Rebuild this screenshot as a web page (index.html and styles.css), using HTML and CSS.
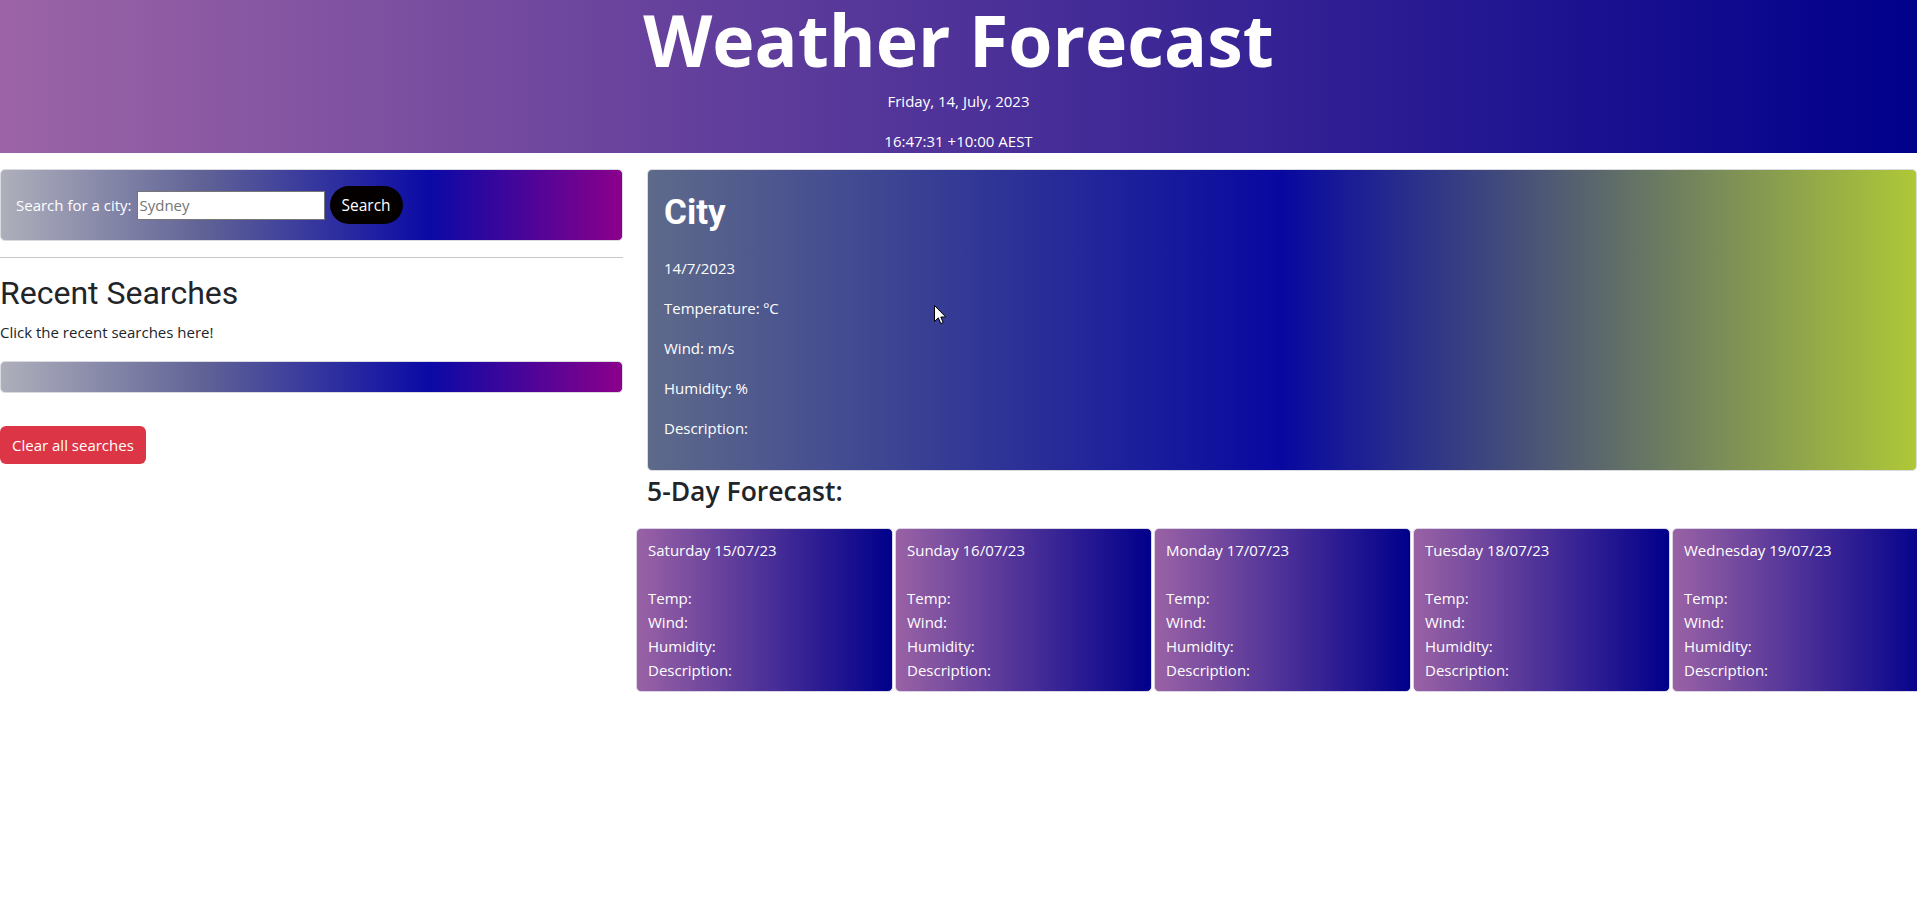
FILE: index.html
```html
<!DOCTYPE html>
<html lang="en">
<head>
<meta charset="utf-8">
<title>Weather Forecast</title>
<link rel="stylesheet" href="styles.css">
</head>
<body>
<header class="site-header">
  <h1 class="site-title">Weather Forecast</h1>
  <p class="header-line">Friday, 14, July, 2023</p>
  <p class="header-line last">16:47:31 +10:00 AEST</p>
</header>

<main class="layout">
  <aside class="sidebar">
    <form class="search-card" onsubmit="return false">
      <label class="search-label" for="city">Search for a city:</label>
      <input class="search-input" id="city" type="text" placeholder="Sydney">
      <button class="search-btn" type="button">Search</button>
    </form>
    <hr class="divider">
    <h2 class="recent-title">Recent Searches</h2>
    <p class="recent-hint">Click the recent searches here!</p>
    <div class="recent-bar"></div>
    <button class="clear-btn" type="button">Clear all searches</button>
  </aside>

  <section class="content">
    <div class="today-card">
      <h2 class="city-name">City</h2>
      <p class="today-line">14/7/2023</p>
      <p class="today-line">Temperature: ºC</p>
      <p class="today-line">Wind: m/s</p>
      <p class="today-line">Humidity: %</p>
      <p class="today-line">Description:</p>
    </div>
    <h3 class="forecast-title">5-Day Forecast:</h3>
    <div class="forecast-row">
      <div class="day-card">
        <div class="day-line">Saturday 15/07/23</div>
        <div class="day-line blank"></div>
        <div class="day-line">Temp:</div>
        <div class="day-line">Wind:</div>
        <div class="day-line">Humidity:</div>
        <div class="day-line">Description:</div>
      </div>
      <div class="day-card">
        <div class="day-line">Sunday 16/07/23</div>
        <div class="day-line blank"></div>
        <div class="day-line">Temp:</div>
        <div class="day-line">Wind:</div>
        <div class="day-line">Humidity:</div>
        <div class="day-line">Description:</div>
      </div>
      <div class="day-card">
        <div class="day-line">Monday 17/07/23</div>
        <div class="day-line blank"></div>
        <div class="day-line">Temp:</div>
        <div class="day-line">Wind:</div>
        <div class="day-line">Humidity:</div>
        <div class="day-line">Description:</div>
      </div>
      <div class="day-card">
        <div class="day-line">Tuesday 18/07/23</div>
        <div class="day-line blank"></div>
        <div class="day-line">Temp:</div>
        <div class="day-line">Wind:</div>
        <div class="day-line">Humidity:</div>
        <div class="day-line">Description:</div>
      </div>
      <div class="day-card">
        <div class="day-line">Wednesday 19/07/23</div>
        <div class="day-line blank"></div>
        <div class="day-line">Temp:</div>
        <div class="day-line">Wind:</div>
        <div class="day-line">Humidity:</div>
        <div class="day-line">Description:</div>
      </div>
    </div>
  </section>
</main>

<svg class="cursor" width="13" height="20" viewBox="0 0 13 20" aria-hidden="true">
  <path d="M0.5 0.5 L0.5 16.5 L4.3 12.8 L6.8 18.6 L9.2 17.6 L6.8 12 L11.8 12 Z" fill="#fff" stroke="#000" stroke-width="1" stroke-linejoin="miter"/>
</svg>
</body>
</html>
```

FILE: styles.css
```css
html {
  overflow-x: hidden;
}

body {
  margin: 0;
  font-family: "Open Sans", "Noto Sans", sans-serif;
  font-size: 15px;
  line-height: 24px;
  color: #212529;
  background: #fff;
  overflow-x: hidden;
  position: relative;
}

/* Header */
.site-header {
  height: 153px;
  overflow: hidden;
  text-align: center;
  color: #fff;
  background: linear-gradient(to right, #9c64a6, #00008b);
}

.site-title {
  margin: 0 0 14px;
  padding-top: 4px;
  font-size: 71.5px;
  line-height: 71px;
  font-weight: 700;
}

.header-line {
  margin: 0 0 16px;
}

.header-line.last {
  margin-bottom: 0;
}

/* Layout */
.layout {
  display: grid;
  grid-template-columns: 623px 1fr;
  column-gap: 24px;
  padding-top: 16px;
  align-items: start;
}

.sidebar,
.content {
  min-width: 0;
}

/* Search card */
.search-card {
  display: flex;
  align-items: center;
  padding: 16px 15px;
  border: 1px solid #dadbe0;
  border-radius: 5px;
  color: #fff;
  background: linear-gradient(to right, #aeafbb 0%, #5f6196 33%, #0a0aa6 69%, #8b008b 100%);
}

.search-label {
  margin-right: 5px;
}

.search-input {
  box-sizing: border-box;
  width: 188px;
  height: 29px;
  padding: 1px 2px;
  border: 1px solid #767676;
  border-radius: 0;
  font: inherit;
  font-size: 15px;
  color: #212529;
  background: #fff;
}

.search-input::placeholder {
  color: #757575;
}

.search-btn {
  margin-left: 5px;
  height: 38px;
  padding: 6px 12px;
  border: 0;
  border-radius: 19px;
  font: inherit;
  font-size: 15.5px;
  color: #fff;
  background: #050000;
}

.divider {
  margin: 16px 0;
  border: 0;
  border-top: 1px solid #c8c9ca;
}

.recent-title {
  margin: 0 0 8px;
  font-family: Roboto, "Liberation Sans", sans-serif;
  font-size: 32px;
  line-height: 38px;
  font-weight: 400;
}

.recent-hint {
  margin: 0 0 17px;
}

.recent-bar {
  height: 30px;
  border: 1px solid #dadbe0;
  border-radius: 5px;
  background: linear-gradient(to right, #aeafbb 0%, #5f6196 33%, #0a0aa6 69%, #8b008b 100%);
}

.clear-btn {
  margin-top: 33px;
  height: 38px;
  padding: 6px 12px;
  border: 0;
  border-radius: 6px;
  font: inherit;
  font-size: 15px;
  color: #fff;
  background: #dc3545;
}

/* Today card */
.today-card {
  height: 302px;
  box-sizing: border-box;
  padding: 16px;
  border: 1px solid #dadbe0;
  border-radius: 5px;
  color: #fff;
  background: linear-gradient(to right, #5e6a8a 0%, #0808a0 50%, #aec837 100%);
}

.city-name {
  margin: 0 0 16px;
  font-family: Roboto, "Liberation Sans", sans-serif;
  font-size: 35px;
  line-height: 54px;
  font-weight: 700;
}

.today-line {
  margin: 0 0 16px;
}

.forecast-title {
  margin: 5px 0 22px;
  font-size: 26.5px;
  line-height: 30px;
  font-weight: 600;
}

.forecast-row {
  display: grid;
  grid-template-columns: repeat(5, 1fr);
  gap: 2px;
  margin: 0 -12px 0 -11px;
}

.day-card {
  box-sizing: border-box;
  height: 164px;
  padding: 9px 11px;
  border: 1px solid #d8d4e4;
  border-radius: 5px;
  color: #fff;
  background: linear-gradient(to right, #9a62a5, #00008b);
}

.day-line {
  height: 24px;
  white-space: nowrap;
}

/* Mouse pointer overlay */
.cursor {
  position: absolute;
  left: 934px;
  top: 305px;
}
```
